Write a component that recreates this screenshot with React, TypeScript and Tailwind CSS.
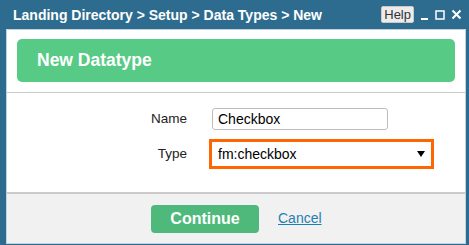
import { useState } from "react"

function TitleBar() {
  return (
    <div className="flex h-[29px] items-center pl-[13px] pr-[7px] text-white">
      <span className="flex-1 text-[14px] font-bold leading-none">
        Landing Directory &gt; Setup &gt; Data Types &gt; New
      </span>
      <button className="h-[17px] rounded-[2px] border border-[#c9c9c9] bg-[#ececec] px-[2px] text-[13px] leading-[15px] text-[#333]">
        Help
      </button>
      <div className="ml-[6px] flex items-center gap-[6px]">
        <svg width="9" height="12" viewBox="0 0 9 12">
          <rect x="1" y="9" width="7" height="2" fill="#fff" />
        </svg>
        <svg width="10" height="12" viewBox="0 0 10 12">
          <rect x="1" y="2" width="8" height="8" fill="none" stroke="#fff" strokeWidth="1.5" />
        </svg>
        <svg width="11" height="12" viewBox="0 0 11 12">
          <path d="M1.5 1.5 L9.5 9.5 M9.5 1.5 L1.5 9.5" stroke="#fff" strokeWidth="2" />
        </svg>
      </div>
    </div>
  )
}

export default function App() {
  const [name, setName] = useState("Checkbox")

  return (
    <div
      className="flex h-[245px] w-[469px] flex-col bg-[#2d6c8e]"
      style={{ fontFamily: '"Liberation Sans", Arial, sans-serif' }}
    >
      <TitleBar />
      <div className="ml-[6px] mr-[3px] flex h-[215px] flex-col border border-[#c3d3de] bg-white">
        {/* Header card */}
        <div className="px-[10px] pt-[9px] pb-[10px]">
          <div className="flex h-[43px] items-center rounded-[5px] bg-[#57cb86] pl-[20px] text-[17.5px] font-bold text-white">
            New Datatype
          </div>
        </div>
        <div className="h-px bg-[#cccccc]" />

        {/* Form */}
        <div className="grid flex-1 grid-cols-[180px_1fr] items-center content-start gap-x-[25px] pt-[15px]">
          <label className="text-right text-[13.5px] text-[#222]">Name</label>
          <input
            value={name}
            onChange={(e) => setName(e.target.value)}
            className="h-[22px] w-[176px] rounded-[3px] border border-[#bdbdbd] px-[5px] text-[14px] text-black outline-none"
          />
          <label className="mt-[9px] text-right text-[13.5px] text-[#222]">Type</label>
          <div className="mt-[9px] -ml-[3px] flex h-[30px] w-[225px] items-center justify-between border-[3px] border-[#ff6600] bg-white pl-[6px] pr-[6px] text-[14px] text-black">
            <span>fm:checkbox</span>
            <svg width="8" height="6" viewBox="0 0 8 6">
              <path d="M0 0 L8 0 L4 6 Z" fill="#000" />
            </svg>
          </div>
        </div>

        {/* Footer */}
        <div className="flex h-[51px] items-center gap-[19px] border-t-2 border-[#cacaca] bg-[#f1f1f1] pl-[144px]">
          <button className="h-[28px] w-[108px] rounded-[4px] bg-[#4fb97b] text-[16px] font-bold text-white">
            Continue
          </button>
          <a href="#" className="text-[14px] text-[#1f7fb1] underline">
            Cancel
          </a>
        </div>
      </div>
    </div>
  )
}
